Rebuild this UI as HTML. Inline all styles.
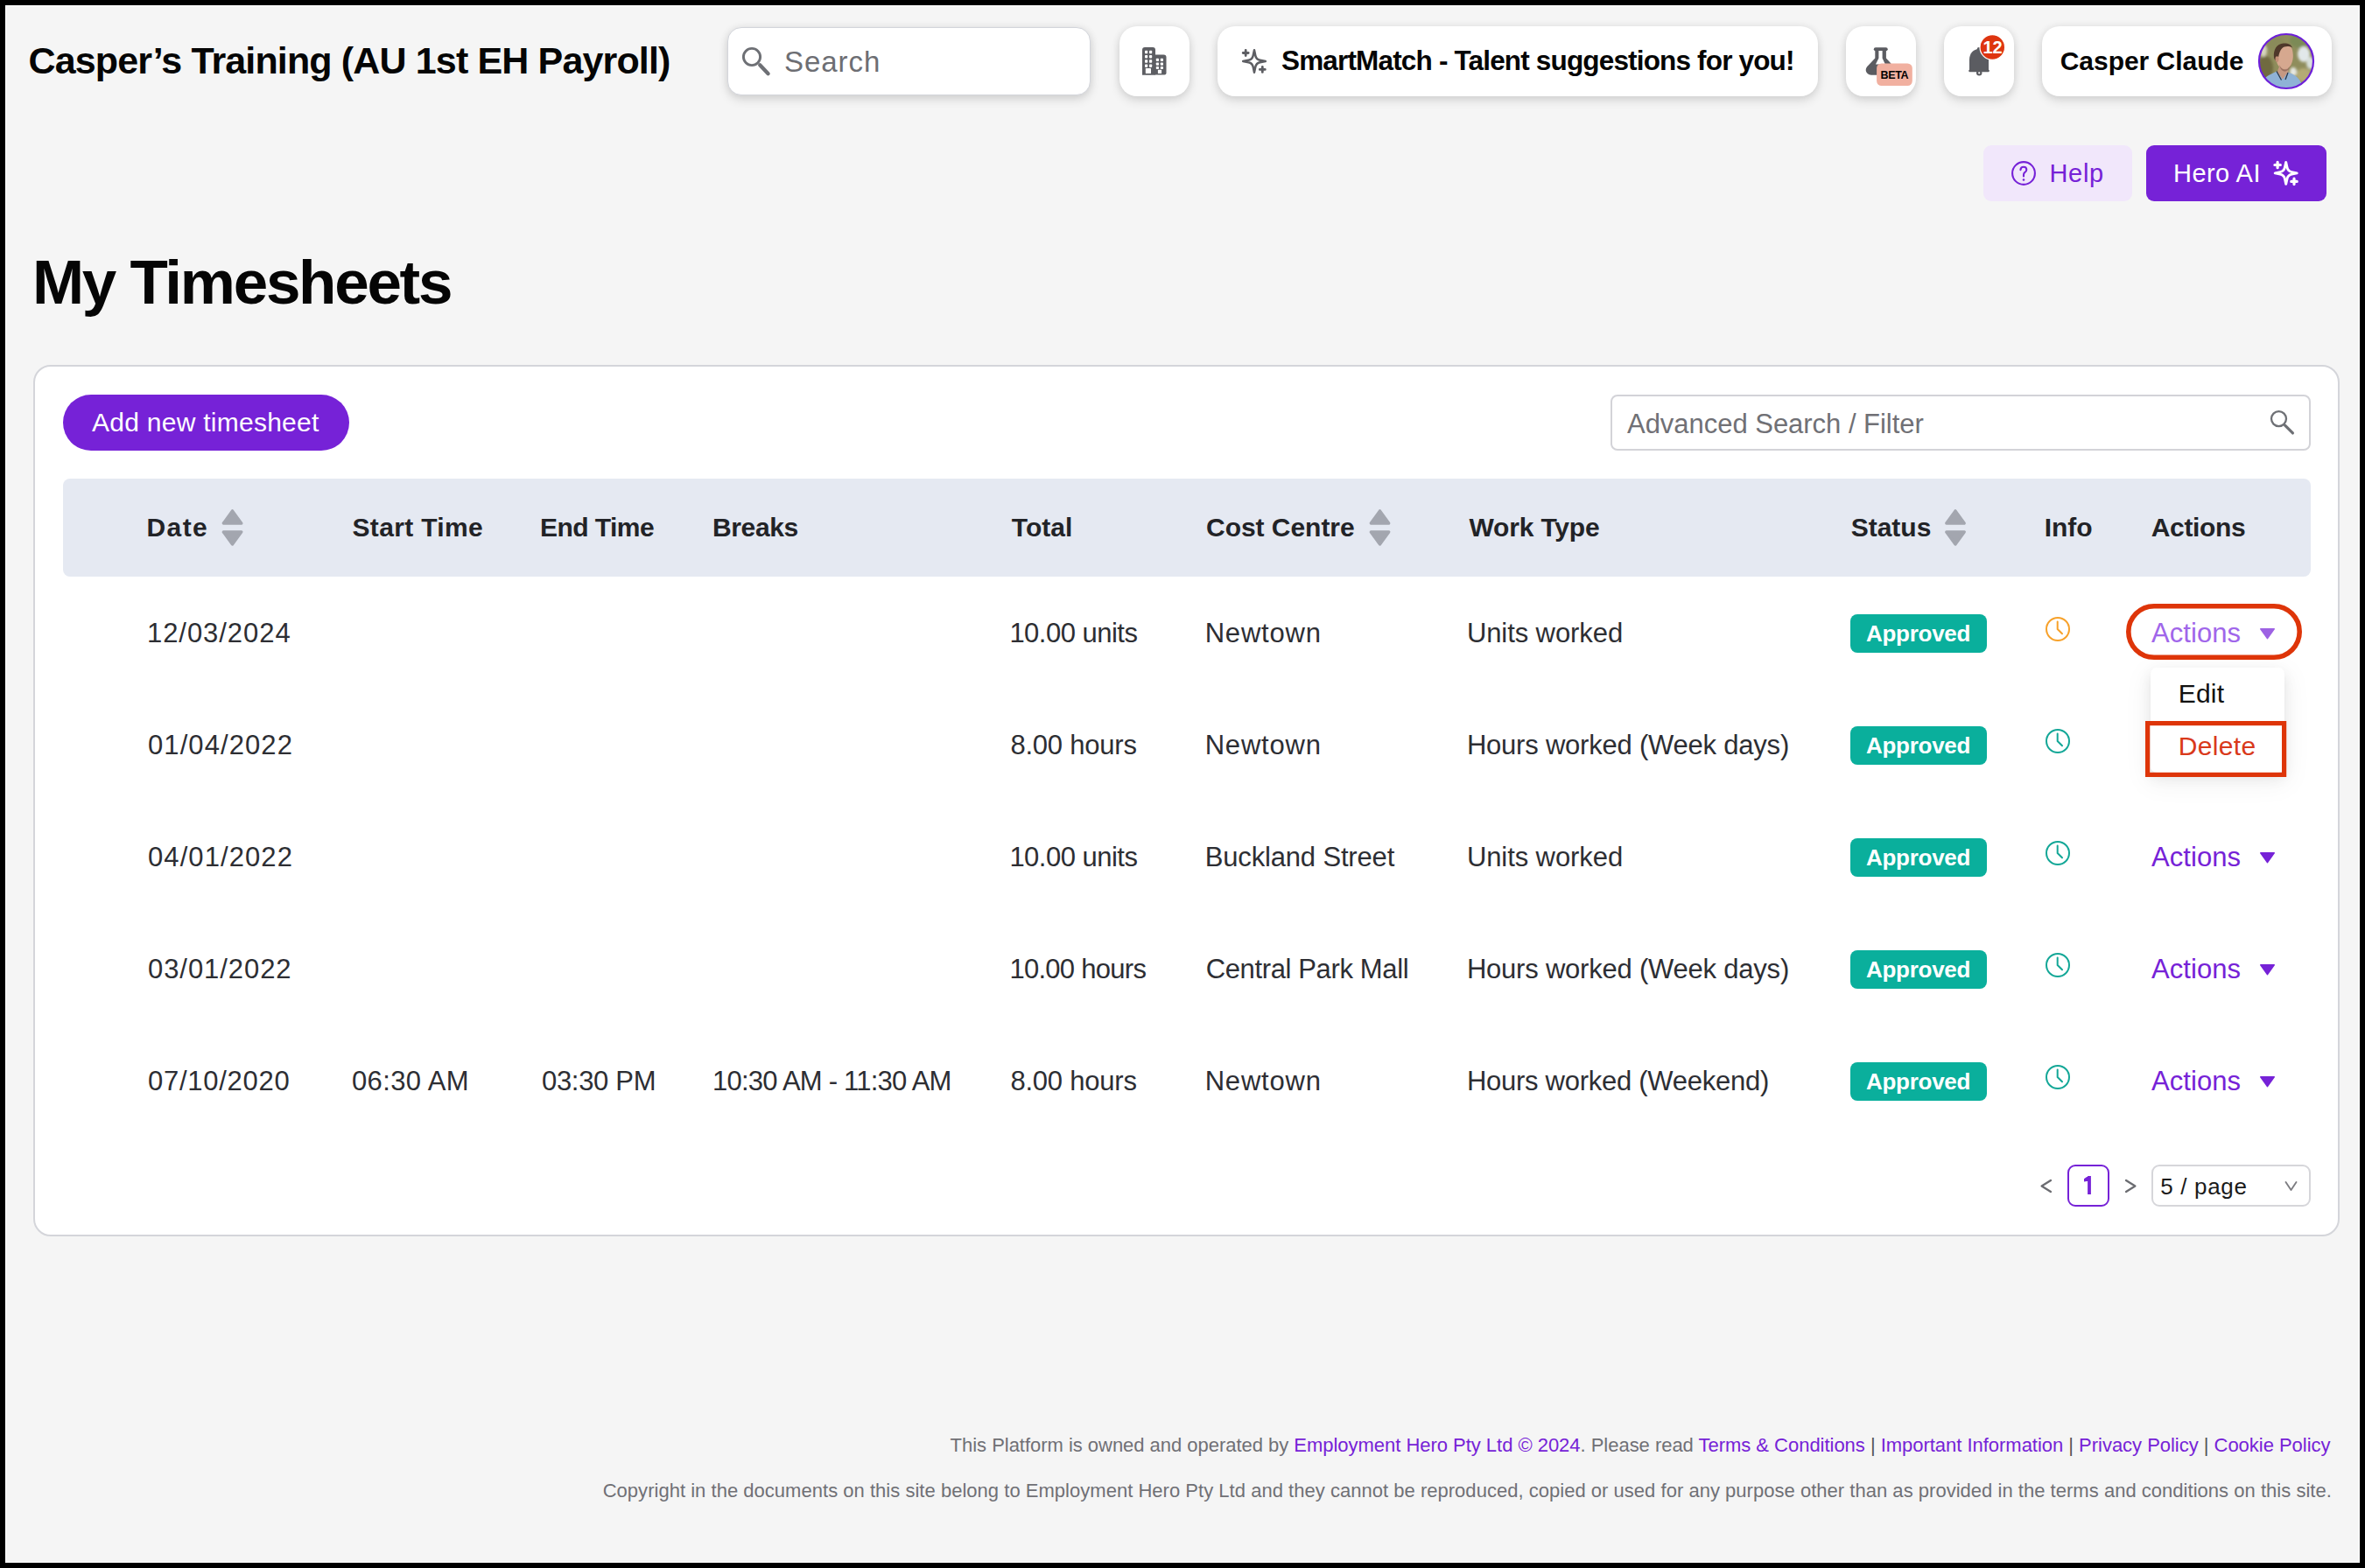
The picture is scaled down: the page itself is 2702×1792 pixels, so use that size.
<!DOCTYPE html>
<html><head><meta charset="utf-8"><title>My Timesheets</title>
<style>
html,body{margin:0;padding:0;width:2702px;height:1792px;overflow:hidden;background:#000;}
body{font-family:"Liberation Sans",sans-serif;}
#frame{position:absolute;left:6px;top:6px;width:2690px;height:1780px;background:#f5f5f5;box-shadow:inset 0 0 0 1px #fff;overflow:hidden;}
.a{position:absolute;box-sizing:border-box;}
.t{position:absolute;white-space:nowrap;}
.t a{color:#7622d7;text-decoration:none;}
.t b{font-weight:400;color:#555;}
.hb{position:absolute;box-sizing:border-box;background:#fff;border-radius:20px;box-shadow:0 0 10px rgba(0,0,0,0.07),0 5px 12px rgba(0,0,0,0.12);}
svg{position:absolute;overflow:visible;}
</style></head><body><div id="frame"></div>
<!-- header boxes -->
<div class="hb" style="left:831px;top:31px;width:415px;height:78px;border-radius:16px;border:1px solid #d3d5db;"></div>
<div class="hb" style="left:1279px;top:30px;width:80px;height:80px;"></div>
<div class="hb" style="left:1391px;top:30px;width:686px;height:80px;"></div>
<div class="hb" style="left:2109px;top:30px;width:80px;height:80px;"></div>
<div class="hb" style="left:2221px;top:30px;width:80px;height:80px;"></div>
<div class="hb" style="left:2333px;top:30px;width:331px;height:80px;"></div>
<!-- help / hero ai -->
<div class="a" style="left:2266px;top:166px;width:170px;height:64px;border-radius:9px;background:#f1e7fb;"></div>
<div class="a" style="left:2452px;top:166px;width:206px;height:64px;border-radius:9px;background:#7622d7;"></div>
<!-- card -->
<div class="a" style="left:38px;top:417px;width:2635px;height:996px;border-radius:20px;background:#fff;border:2px solid #d4d5da;"></div>
<div class="a" style="left:72px;top:451px;width:327px;height:64px;border-radius:32px;background:#7622d7;"></div>
<div class="a" style="left:1840px;top:451px;width:800px;height:64px;border-radius:8px;background:#fff;border:2px solid #d3d3d8;"></div>
<div class="a" style="left:72px;top:547px;width:2568px;height:112px;border-radius:8px;background:#e5e9f2;"></div>
<!-- badges -->
<div class="a" style="left:2114px;top:702px;width:156px;height:44px;border-radius:8px;background:#0aaf9c;"></div>
<div class="a" style="left:2114px;top:830px;width:156px;height:44px;border-radius:8px;background:#0aaf9c;"></div>
<div class="a" style="left:2114px;top:958px;width:156px;height:44px;border-radius:8px;background:#0aaf9c;"></div>
<div class="a" style="left:2114px;top:1086px;width:156px;height:44px;border-radius:8px;background:#0aaf9c;"></div>
<div class="a" style="left:2114px;top:1214px;width:156px;height:44px;border-radius:8px;background:#0aaf9c;"></div>
<!-- dropdown -->
<div class="a" style="left:2457px;top:763px;width:153px;height:120px;border-radius:7px;background:#fff;box-shadow:0 6px 16px 0 rgba(0,0,0,0.08),0 3px 6px -4px rgba(0,0,0,0.12),0 9px 28px 8px rgba(0,0,0,0.04);"></div>
<!-- pagination -->
<div class="a" style="left:2362px;top:1331px;width:48px;height:48px;border-radius:9px;border:2px solid #7622d7;background:#fff;"></div>
<div class="a" style="left:2458px;top:1331px;width:182px;height:48px;border-radius:9px;border:2px solid #d6d6da;background:#fff;"></div>

<svg width="2702" height="1792" style="left:0;top:0">
<defs>
 <clipPath id="avc"><circle cx="2612" cy="70" r="31"/></clipPath>
 <filter id="bl" x="-20%" y="-20%" width="140%" height="140%"><feGaussianBlur stdDeviation="1.6"/></filter>
 <filter id="bl2" x="-20%" y="-20%" width="140%" height="140%"><feGaussianBlur stdDeviation="0.7"/></filter>
</defs>
<!-- header search icon -->
<g fill="none" stroke="#6e7075" stroke-linecap="round">
 <circle cx="859" cy="65" r="9.6" stroke-width="2.9"/>
 <path d="M868.2 74.2 L877.6 84.2" stroke-width="4.3"/>
</g>
<!-- building icon -->
<g fill="#5d5e63">
 <path d="M1305 57 a3 3 0 0 1 3 -3 h9 a3 3 0 0 1 3 3 v28.7 h-15 z"/>
 <path d="M1319.5 62.6 h10 a3 3 0 0 1 3 3 v18 a2 2 0 0 1 -2 2 h-11 z"/>
 <path d="M1305 83.7 v-2 h2 z"/>
</g>
<g fill="#fff">
 <rect x="1308" y="57.8" width="3.2" height="3.4" rx="0.8"/><rect x="1313" y="57.8" width="3.2" height="3.4" rx="0.8"/>
 <rect x="1308" y="63" width="3.2" height="3.4" rx="0.8"/><rect x="1313" y="63" width="3.2" height="3.4" rx="0.8"/>
 <rect x="1308" y="68.3" width="3.2" height="3.4" rx="0.8"/><rect x="1313" y="68.3" width="3.2" height="3.4" rx="0.8"/>
 <rect x="1308" y="73.5" width="3.2" height="3.4" rx="0.8"/><rect x="1313" y="73.5" width="3.2" height="3.4" rx="0.8"/>
 <rect x="1308.8" y="78" width="6.2" height="6" rx="0.6"/>
 <rect x="1320.8" y="66.8" width="3.2" height="3.2" rx="0.8"/><rect x="1325.8" y="66.8" width="3.2" height="3.2" rx="0.8"/>
 <rect x="1320.8" y="71.4" width="3.2" height="3.4" rx="0.8"/><rect x="1325.8" y="71.4" width="3.2" height="3.4" rx="0.8"/>
 <rect x="1320.8" y="76" width="3.2" height="3" rx="0.8"/><rect x="1325.8" y="76" width="3.2" height="3" rx="0.8"/>
 <rect x="1322.9" y="79.8" width="4.2" height="4.2" rx="0.6"/>
</g>
<!-- smartmatch sparkle -->
<g fill="none" stroke="#5d5e63" stroke-linecap="round" stroke-linejoin="round">
 <path d="M1433.00 57.20 L1434.30 63.40 Q1435.20 67.80 1439.60 68.70 L1445.80 70.00 L1439.60 71.30 Q1435.20 72.20 1434.30 76.60 L1433.00 82.80 L1431.70 76.60 Q1430.80 72.20 1426.40 71.30 L1420.20 70.00 L1426.40 68.70 Q1430.80 67.80 1431.70 63.40 Z" stroke-width="2.5"/>
 <path d="M1423.2 57.5 v6 M1420.2 60.5 h6" stroke-width="2.8"/>
 <path d="M1442.3 76.4 v6 M1439.3 79.4 h6" stroke-width="2.8"/>
</g>
<!-- flask -->
<g fill="#5b5c61">
 <rect x="2140.8" y="54.2" width="15.9" height="4" rx="2"/>
 <path d="M2142.3 57 h12.6 v9.6 l5.5 5.8 v13.3 h-22.4 c-3.5 0 -6.8 -2.6 -6.2 -6.6 c0.3 -1.6 1.2 -2.8 2.2 -3.8 l8.3 -8.7 z"/>
</g>
<path d="M2146.4 58 h4.2 v8.6 l3.3 6.9 h-11 l3.5 -6.9 z" fill="#fff"/>
<rect x="2144.1" y="72.4" width="40.7" height="25.6" rx="5.5" fill="#f1b0a0"/>
<!-- bell -->
<g fill="#5b5c61">
 <circle cx="2261" cy="56.4" r="2.3"/>
 <path d="M2261 56 c-6.5 0 -11 5 -11 12.5 v11.8 h22 v-11.8 c0 -7.5 -4.5 -12.5 -11 -12.5 z"/>
 <rect x="2249.2" y="79.8" width="23.7" height="2.4" rx="1.1"/>
 <circle cx="2261.2" cy="83.3" r="3.2"/>
</g>
<circle cx="2261.2" cy="83.3" r="1.1" fill="#fff"/>
<circle cx="2276.3" cy="54" r="14.3" fill="#de3510" stroke="#fff" stroke-width="1.2"/>
<!-- avatar -->
<g clip-path="url(#avc)">
 <rect x="2578" y="36" width="70" height="70" fill="#8f8d5c"/>
 <g filter="url(#bl)">
  <ellipse cx="2596" cy="48" rx="14" ry="9" fill="#8a8a5a"/>
  <ellipse cx="2628" cy="46" rx="12" ry="9" fill="#7b8a56"/>
  <ellipse cx="2588" cy="78" rx="9" ry="14" fill="#6f6a40"/>
  <ellipse cx="2586" cy="58" rx="4" ry="7" fill="#d6d5bd"/>
  <ellipse cx="2632" cy="62" rx="7" ry="9" fill="#e2e8ea"/>
  <ellipse cx="2640" cy="72" rx="5" ry="7" fill="#d8e0dc"/>
  <ellipse cx="2632" cy="86" rx="9" ry="8" fill="#b4ab74"/>
  <ellipse cx="2620" cy="82" rx="4" ry="5" fill="#e6e8e2"/>
 </g>
 <g filter="url(#bl2)">
  <path d="M2601 94 c0 -8 1 -14 3 -18 l10 0 l1 18 z" fill="#c59882"/>
  <path d="M2600 62 c0 -8 4 -12 10 -12 c6 0 9 4 9.5 10 c0.5 3 0.5 7 -0.5 10 c-1.5 6 -5 9 -9 9 c-4 0 -7 -3 -8.5 -7 l-1.5 -6 z" fill="#d6a88f"/>
  <path d="M2604 74 c2 4 4 5.5 6.5 5.5 c3 0 5 -2 7 -5 c-2 5 -4.5 7 -7 7 c-3 0 -5 -2 -6.5 -7.5 z" fill="#9a7160"/>
  <path d="M2598 66 c-1 -9 3 -16 11 -16.5 c5 -0.3 9 1.5 10 5 c-4 -2 -9 -2 -12 1 c-2 2 -3 5 -4 10 l-1 5 c-2 -1 -3.5 -2 -4 -4.5 z" fill="#4f3829"/>
  <ellipse cx="2601.5" cy="67.5" rx="2" ry="3.2" fill="#c48f77"/>
  <path d="M2582 106 c1 -10 4 -17 10 -20 l9 -4.5 l7 9 l6 -8 l5 2 c6 3 11 8 14 21.5 z" fill="#8fb2d6"/>
  <path d="M2601 81.5 l5.5 10 M2614 83 l-3 8" fill="none" stroke="#2b3646" stroke-width="1.3"/>
 </g>
</g>
<circle cx="2612" cy="70" r="31" fill="none" stroke="#6d1fd9" stroke-width="2.2"/>
<!-- help icon -->
<g fill="none" stroke="#7622d7" stroke-linecap="round" stroke-linejoin="round">
 <circle cx="2312" cy="198" r="12.9" stroke-width="2.1"/>
 <path d="M2308.4 194.2 C2308.6 192 2310 190.8 2312 190.8 C2314 190.8 2315.3 192.2 2315.3 194 C2315.3 195.6 2314.3 196.4 2313.2 197.2 C2312.3 197.9 2312 198.6 2312 199.8 L2312 201.4" stroke-width="2.1"/>
</g>
<circle cx="2312" cy="205.5" r="1.3" fill="#7622d7"/>
<!-- hero ai sparkle -->
<g fill="none" stroke="#fff" stroke-linecap="round" stroke-linejoin="round">
 <path d="M2611.70 185.40 L2613.00 191.30 Q2613.90 195.70 2618.30 196.60 L2624.20 197.90 L2618.30 199.20 Q2613.90 200.10 2613.00 204.50 L2611.70 210.40 L2610.40 204.50 Q2609.50 200.10 2605.10 199.20 L2599.20 197.90 L2605.10 196.60 Q2609.50 195.70 2610.40 191.30 Z" stroke-width="2.9"/>
 <path d="M2602.1 185.3 v6.4 M2598.9 188.5 h6.4" stroke-width="3.2"/>
 <path d="M2621 204.2 v6.4 M2617.8 207.4 h6.4" stroke-width="3.2"/>
</g>
<!-- adv search icon -->
<g fill="none" stroke="#6e7075" stroke-linecap="round">
 <circle cx="2603.5" cy="478.6" r="8.5" stroke-width="2.3"/>
 <path d="M2610.6 486.2 L2619.4 494.9" stroke-width="3.3"/>
</g>
<!-- sort icons -->
<g fill="#a3a6af" stroke="#a3a6af" stroke-width="3.4" stroke-linejoin="round">
 <path d="M265.5 583.9 L275.7 598.1 L255.3 598.1 Z"/><path d="M265.5 622 L275.7 607.9 L255.3 607.9 Z"/>
 <path d="M1576.5 583.9 L1586.7 598.1 L1566.3 598.1 Z"/><path d="M1576.5 622 L1586.7 607.9 L1566.3 607.9 Z"/>
 <path d="M2234 583.9 L2244.2 598.1 L2223.8 598.1 Z"/><path d="M2234 622 L2244.2 607.9 L2223.8 607.9 Z"/>
</g>
<!-- clocks -->
<g fill="none" stroke-linecap="round" stroke-linejoin="round" stroke-width="2">
 <g stroke="#f7a12a"><circle cx="2351" cy="719" r="13"/><path d="M2350.7 710.5 V719 L2356 724.3"/></g>
 <g stroke="#13a797"><circle cx="2351" cy="847" r="13"/><path d="M2350.7 838.5 V847 L2356 852.3"/></g>
 <g stroke="#13a797"><circle cx="2351" cy="975" r="13"/><path d="M2350.7 966.5 V975 L2356 980.3"/></g>
 <g stroke="#13a797"><circle cx="2351" cy="1103" r="13"/><path d="M2350.7 1094.5 V1103 L2356 1108.3"/></g>
 <g stroke="#13a797"><circle cx="2351" cy="1231" r="13"/><path d="M2350.7 1222.5 V1231 L2356 1236.3"/></g>
</g>
<!-- action triangles -->
<g stroke-linejoin="round" stroke-width="1.6">
 <path d="M2582.8 718.8 H2598.2 L2590.5 729.6 Z" fill="#9d62e3" stroke="#9d62e3"/>
 <path d="M2582.8 974.8 H2598.2 L2590.5 985.6 Z" fill="#7622d7" stroke="#7622d7"/>
 <path d="M2582.8 1102.8 H2598.2 L2590.5 1113.6 Z" fill="#7622d7" stroke="#7622d7"/>
 <path d="M2582.8 1230.8 H2598.2 L2590.5 1241.6 Z" fill="#7622d7" stroke="#7622d7"/>
</g>
<!-- pagination arrows -->
<g fill="none" stroke="#6b6c71" stroke-width="2.3" stroke-linecap="round" stroke-linejoin="round">
 <path d="M2343 1349 L2332.6 1355.5 L2343 1362"/>
 <path d="M2429 1349 L2439.4 1355.5 L2429 1362"/>
 <path d="M2611.5 1351 L2617.5 1360 L2623.5 1351" stroke="#7d7d82" stroke-width="1.9"/>
</g>
<path d="M2385.1 1365 V1344 H2388.9 V1365 Z M2381 1347.2 L2385.6 1344 L2386 1349.8 L2381 1350.4 Z" fill="#7622d7"/>
<!-- annotations -->
<rect x="2431.8" y="692.8" width="195.4" height="58.4" rx="29.2" fill="none" stroke="#de3509" stroke-width="5.6"/>
<rect x="2453.6" y="826.6" width="156" height="58.8" fill="none" stroke="#de3509" stroke-width="5.2"/>
</svg>

<div class="t" style="left:32.50px;top:47.99px;font-size:43px;line-height:43px;font-weight:700;color:#050505;letter-spacing:-0.857px;">Casper’s Training (AU 1st EH Payroll)</div>
<div class="t" style="left:896.00px;top:54.46px;font-size:33px;line-height:33px;font-weight:400;color:#6d6e73;letter-spacing:0.959px;">Search</div>
<div class="t" style="left:1464.00px;top:54.03px;font-size:31.5px;line-height:31.5px;font-weight:700;color:#050505;letter-spacing:-0.833px;">SmartMatch - Talent suggestions for you!</div>
<div class="t" style="left:2353.70px;top:55.00px;font-size:30px;line-height:30px;font-weight:700;color:#050505;letter-spacing:-0.024px;">Casper Claude</div>
<div class="t" style="left:2148.50px;top:79.82px;font-size:12.5px;line-height:12.5px;font-weight:700;color:#000;letter-spacing:-0.357px;">BETA</div>
<div class="t" style="left:2265.50px;top:44.47px;font-size:20px;line-height:20px;font-weight:700;color:#fff;letter-spacing:0.000px;">12</div>
<div class="t" style="left:2341.50px;top:183.85px;font-size:29px;line-height:29px;font-weight:400;color:#7622d7;letter-spacing:0.662px;">Help</div>
<div class="t" style="left:2483.00px;top:183.85px;font-size:29px;line-height:29px;font-weight:400;color:#fff;letter-spacing:0.457px;">Hero AI</div>
<div class="t" style="left:37.00px;top:287.28px;font-size:71px;line-height:71px;font-weight:700;color:#050505;letter-spacing:-2.272px;">My Timesheets</div>
<div class="t" style="left:105.00px;top:468.00px;font-size:30px;line-height:30px;font-weight:400;color:#fff;letter-spacing:0.262px;">Add new timesheet</div>
<div class="t" style="left:1859.00px;top:468.75px;font-size:31px;line-height:31px;font-weight:400;color:#707075;letter-spacing:-0.027px;">Advanced Search / Filter</div>
<div class="t" style="left:167.60px;top:588.00px;font-size:30px;line-height:30px;font-weight:700;color:#222327;letter-spacing:1.353px;">Date</div>
<div class="t" style="left:402.50px;top:588.00px;font-size:30px;line-height:30px;font-weight:700;color:#222327;letter-spacing:0.336px;">Start Time</div>
<div class="t" style="left:617.00px;top:588.00px;font-size:30px;line-height:30px;font-weight:700;color:#222327;letter-spacing:-0.541px;">End Time</div>
<div class="t" style="left:814.00px;top:588.00px;font-size:30px;line-height:30px;font-weight:700;color:#222327;letter-spacing:-0.359px;">Breaks</div>
<div class="t" style="left:1155.80px;top:588.00px;font-size:30px;line-height:30px;font-weight:700;color:#222327;letter-spacing:0.000px;">Total</div>
<div class="t" style="left:1378.00px;top:588.00px;font-size:30px;line-height:30px;font-weight:700;color:#222327;letter-spacing:-0.034px;">Cost Centre</div>
<div class="t" style="left:1678.50px;top:588.00px;font-size:30px;line-height:30px;font-weight:700;color:#222327;letter-spacing:-0.175px;">Work Type</div>
<div class="t" style="left:2114.70px;top:588.00px;font-size:30px;line-height:30px;font-weight:700;color:#222327;letter-spacing:0.000px;">Status</div>
<div class="t" style="left:2335.70px;top:588.00px;font-size:30px;line-height:30px;font-weight:700;color:#222327;letter-spacing:0.000px;">Info</div>
<div class="t" style="left:2457.80px;top:588.00px;font-size:30px;line-height:30px;font-weight:700;color:#222327;letter-spacing:-0.354px;">Actions</div>
<div class="t" style="left:168.00px;top:708.15px;font-size:31px;line-height:31px;font-weight:400;color:#2d2e33;letter-spacing:0.943px;">12/03/2024</div>
<div class="t" style="left:1153.40px;top:708.15px;font-size:31px;line-height:31px;font-weight:400;color:#2d2e33;letter-spacing:-0.517px;">10.00 units</div>
<div class="t" style="left:1376.70px;top:708.15px;font-size:31px;line-height:31px;font-weight:400;color:#2d2e33;letter-spacing:0.791px;">Newtown</div>
<div class="t" style="left:1675.90px;top:708.15px;font-size:31px;line-height:31px;font-weight:400;color:#2d2e33;letter-spacing:-0.085px;">Units worked</div>
<div class="t" style="left:2132.00px;top:710.89px;font-size:26px;line-height:26px;font-weight:700;color:#fff;letter-spacing:-0.280px;">Approved</div>
<div class="t" style="left:2458.00px;top:708.15px;font-size:31px;line-height:31px;font-weight:400;color:#a066ea;letter-spacing:0.057px;">Actions</div>
<div class="t" style="left:169.00px;top:836.15px;font-size:31px;line-height:31px;font-weight:400;color:#2d2e33;letter-spacing:1.088px;">01/04/2022</div>
<div class="t" style="left:1154.40px;top:836.15px;font-size:31px;line-height:31px;font-weight:400;color:#2d2e33;letter-spacing:-0.221px;">8.00 hours</div>
<div class="t" style="left:1376.70px;top:836.15px;font-size:31px;line-height:31px;font-weight:400;color:#2d2e33;letter-spacing:0.791px;">Newtown</div>
<div class="t" style="left:1675.90px;top:836.15px;font-size:31px;line-height:31px;font-weight:400;color:#2d2e33;letter-spacing:-0.215px;">Hours worked (Week days)</div>
<div class="t" style="left:2132.00px;top:838.89px;font-size:26px;line-height:26px;font-weight:700;color:#fff;letter-spacing:-0.280px;">Approved</div>
<div class="t" style="left:169.00px;top:964.15px;font-size:31px;line-height:31px;font-weight:400;color:#2d2e33;letter-spacing:1.088px;">04/01/2022</div>
<div class="t" style="left:1153.40px;top:964.15px;font-size:31px;line-height:31px;font-weight:400;color:#2d2e33;letter-spacing:-0.517px;">10.00 units</div>
<div class="t" style="left:1376.70px;top:964.15px;font-size:31px;line-height:31px;font-weight:400;color:#2d2e33;letter-spacing:-0.160px;">Buckland Street</div>
<div class="t" style="left:1675.90px;top:964.15px;font-size:31px;line-height:31px;font-weight:400;color:#2d2e33;letter-spacing:-0.085px;">Units worked</div>
<div class="t" style="left:2132.00px;top:966.89px;font-size:26px;line-height:26px;font-weight:700;color:#fff;letter-spacing:-0.280px;">Approved</div>
<div class="t" style="left:2458.00px;top:964.15px;font-size:31px;line-height:31px;font-weight:400;color:#7622d7;letter-spacing:0.057px;">Actions</div>
<div class="t" style="left:169.00px;top:1092.15px;font-size:31px;line-height:31px;font-weight:400;color:#2d2e33;letter-spacing:0.932px;">03/01/2022</div>
<div class="t" style="left:1153.40px;top:1092.15px;font-size:31px;line-height:31px;font-weight:400;color:#2d2e33;letter-spacing:-0.723px;">10.00 hours</div>
<div class="t" style="left:1377.70px;top:1092.15px;font-size:31px;line-height:31px;font-weight:400;color:#2d2e33;letter-spacing:-0.366px;">Central Park Mall</div>
<div class="t" style="left:1675.90px;top:1092.15px;font-size:31px;line-height:31px;font-weight:400;color:#2d2e33;letter-spacing:-0.215px;">Hours worked (Week days)</div>
<div class="t" style="left:2132.00px;top:1094.89px;font-size:26px;line-height:26px;font-weight:700;color:#fff;letter-spacing:-0.280px;">Approved</div>
<div class="t" style="left:2458.00px;top:1092.15px;font-size:31px;line-height:31px;font-weight:400;color:#7622d7;letter-spacing:0.057px;">Actions</div>
<div class="t" style="left:169.00px;top:1220.15px;font-size:31px;line-height:31px;font-weight:400;color:#2d2e33;letter-spacing:0.721px;">07/10/2020</div>
<div class="t" style="left:402.00px;top:1220.15px;font-size:31px;line-height:31px;font-weight:400;color:#2d2e33;letter-spacing:0.362px;">06:30 AM</div>
<div class="t" style="left:619.00px;top:1220.15px;font-size:31px;line-height:31px;font-weight:400;color:#2d2e33;letter-spacing:-0.309px;">03:30 PM</div>
<div class="t" style="left:814.00px;top:1220.15px;font-size:31px;line-height:31px;font-weight:400;color:#2d2e33;letter-spacing:-0.767px;">10:30 AM - 11:30 AM</div>
<div class="t" style="left:1154.40px;top:1220.15px;font-size:31px;line-height:31px;font-weight:400;color:#2d2e33;letter-spacing:-0.221px;">8.00 hours</div>
<div class="t" style="left:1376.70px;top:1220.15px;font-size:31px;line-height:31px;font-weight:400;color:#2d2e33;letter-spacing:0.791px;">Newtown</div>
<div class="t" style="left:1675.90px;top:1220.15px;font-size:31px;line-height:31px;font-weight:400;color:#2d2e33;letter-spacing:-0.266px;">Hours worked (Weekend)</div>
<div class="t" style="left:2132.00px;top:1222.89px;font-size:26px;line-height:26px;font-weight:700;color:#fff;letter-spacing:-0.280px;">Approved</div>
<div class="t" style="left:2458.00px;top:1220.15px;font-size:31px;line-height:31px;font-weight:400;color:#7622d7;letter-spacing:0.057px;">Actions</div>
<div class="t" style="left:2488.70px;top:778.30px;font-size:30px;line-height:30px;font-weight:400;color:#111;letter-spacing:0.214px;">Edit</div>
<div class="t" style="left:2488.70px;top:838.30px;font-size:30px;line-height:30px;font-weight:400;color:#d9391b;letter-spacing:0.333px;">Delete</div>
<div class="t" style="left:2468.30px;top:1342.59px;font-size:26px;line-height:26px;font-weight:400;color:#1a1a1a;letter-spacing:0.670px;">5 / page</div>
<div class="t" style="left:1085.60px;top:1640.97px;font-size:22px;line-height:22px;font-weight:400;color:#707075;letter-spacing:-0.027px;">This Platform is owned and operated by <a>Employment Hero Pty Ltd © 2024</a>. Please read <a>Terms &amp; Conditions</a> <b>|</b> <a>Important Information</a> <b>|</b> <a>Privacy Policy</a> <b>|</b> <a>Cookie Policy</a></div>
<div class="t" style="left:688.70px;top:1693.27px;font-size:22px;line-height:22px;font-weight:400;color:#707075;letter-spacing:0.025px;">Copyright in the documents on this site belong to Employment Hero Pty Ltd and they cannot be reproduced, copied or used for any purpose other than as provided in the terms and conditions on this site.</div>
</body></html>
